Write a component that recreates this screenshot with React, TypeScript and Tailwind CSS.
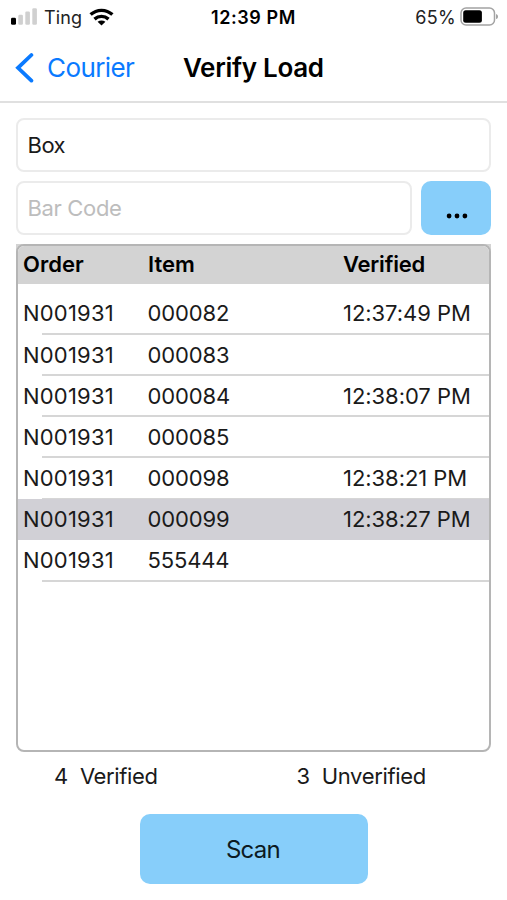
const rows = [
  { item: "000082", order: "N001931", verified: "12:37:49 PM" },
  { item: "000083", order: "N001931", verified: "" },
  { item: "000084", order: "N001931", verified: "12:38:07 PM" },
  { item: "000085", order: "N001931", verified: "" },
  { item: "000098", order: "N001931", verified: "12:38:21 PM" },
  { item: "000099", order: "N001931", verified: "12:38:27 PM", selected: true },
  { item: "555444", order: "N001931", verified: "" },
];

function StatusBar() {
  return (
    <div className="grid h-[34px] grid-cols-3 items-center text-[18px] leading-none text-[#222]">
      <div className="flex items-center pl-[10px]">
        <svg width="28" height="18" viewBox="0 0 28 18" aria-hidden="true">
          <rect x="1" y="9.8" width="5" height="7" rx="1.4" fill="#000" />
          <rect x="8.3" y="6.8" width="4.6" height="10" rx="1.2" fill="#d0d0d0" />
          <rect x="15.3" y="3.6" width="4.6" height="13.2" rx="1.2" fill="#d0d0d0" />
          <rect x="22.3" y="0.2" width="4.6" height="16.6" rx="1.2" fill="#d0d0d0" />
        </svg>
        <span className="ml-[6px] pt-px tracking-[0.1px]">Ting</span>
        <svg className="ml-[7px]" width="25" height="18" viewBox="0 0 25 18" aria-hidden="true">
          <g fill="none" stroke="#000" strokeWidth="3.4">
            <path d="M1.6 6.6C7.9 .9 17.1 .9 23.4 6.6" />
            <path d="M5.5 11.1C9.6 7.5 15.4 7.5 19.5 11.1" />
          </g>
          <path d="M8.6 13.8C10.9 12 14.1 12 16.4 13.8L12.5 17.6Z" fill="#000" />
        </svg>
      </div>
      <span className="pt-px text-center font-semibold tracking-[0.6px] text-black">12:39 PM</span>
      <div className="flex items-center justify-end pr-[8px]">
        <span className="pt-px tracking-[0.3px]">65%</span>
        <svg className="ml-[4px]" width="39" height="20" viewBox="0 0 39 20" aria-hidden="true">
          <rect x="1" y="1" width="33.5" height="17" rx="5" fill="none" stroke="#a3a3a3" strokeWidth="1.5" />
          <rect x="3.2" y="3.3" width="18.7" height="12.4" rx="2.5" fill="#000" />
          <path d="M36 6.9C38.7 7.8 38.7 11.2 36 12.1Z" fill="#a3a3a3" />
        </svg>
      </div>
    </div>
  );
}

function NavBar() {
  return (
    <header className="flex h-[69px] items-center border-b-2 border-[#e0e0e0] pl-[15px]">
      <button className="flex w-[168px] items-center text-[26px] text-[#0a7aff]">
        <svg width="19" height="32" viewBox="0 0 19 32" aria-hidden="true">
          <path
            d="M16.4 3L3 15.8L16.4 28.6"
            fill="none"
            stroke="currentColor"
            strokeWidth="3.8"
            strokeLinecap="round"
            strokeLinejoin="miter"
          />
        </svg>
        <span className="ml-[13px] tracking-[-0.6px]">Courier</span>
      </button>
      <h1 className="text-[26px] font-semibold tracking-[-0.3px]">Verify Load</h1>
    </header>
  );
}

export default function App() {
  return (
    <div className="flex h-[900px] w-[507px] flex-col overflow-hidden bg-white font-['Inter',sans-serif] text-[22px] text-black">
      <StatusBar />
      <NavBar />

      <main className="flex flex-1 flex-col px-4 pt-[15px] text-[#1a1a1a]">
        <div className="flex h-[54px] w-[475px] items-center rounded-[8px] border-2 border-[#ebebeb] pl-[9.5px] tracking-[-0.5px]">
          Box
        </div>
        <div className="mt-[9px] flex h-[54px] w-[475px] gap-[9px]">
          <div className="flex w-[396px] items-center rounded-[8px] border-2 border-[#ebebeb] pl-[9.5px] tracking-[-0.35px] text-[#bdbdbd]">
            Bar Code
          </div>
          <button className="flex flex-1 items-center justify-center rounded-[10px] bg-[#87cefa]" aria-label="More">
            <svg className="mt-[15px] ml-[2px]" width="22" height="6" viewBox="0 0 22 6" aria-hidden="true">
              <circle cx="3.1" cy="3" r="2.4" />
              <circle cx="11" cy="3" r="2.4" />
              <circle cx="18.9" cy="3" r="2.4" />
            </svg>
          </button>
        </div>

        <section className="mt-[9px] w-[475px] bg-[linear-gradient(#d3d3d3_20px,transparent_20px)]">
          <div className="h-[508px] overflow-hidden rounded-[8px] border-2 border-[#b5b5b5] bg-white">
            <div className="grid h-[38px] grid-cols-[124px_196px_1fr] items-center bg-[#d3d3d3] pb-px pl-[5px] font-semibold text-black">
              <span>Order</span>
              <span className="pl-px">Item</span>
              <span className="tracking-[-0.2px]">Verified</span>
            </div>
            <ul className="pt-[9.4px]">
              {rows.map((row) => (
                <li
                  key={row.item}
                  className={`h-[41.15px] ${row.selected ? "bg-[#d1d0d6]" : ""}`}
                >
                  <div className="grid h-[39.6px] grid-cols-[124px_196px_1fr] items-center whitespace-nowrap pt-[1.6px] pl-[5px]">
                    <span className="tracking-[0.2px]">{row.order}</span>
                    <span className="pl-[0.5px] tracking-[-0.15px]">{row.item}</span>
                    <span className="tracking-[-0.05px]">{row.verified}</span>
                  </div>
                  {!row.selected && <div className="ml-[24px] h-[2px] bg-[#d6d6d6]" />}
                </li>
              ))}
            </ul>
          </div>
        </section>

        <div className="flex h-[48px] items-center tracking-[-0.35px]">
          <div className="flex w-[242px] gap-[12px] pl-[38px]">
            <span>4</span>
            <span>Verified</span>
          </div>
          <div className="flex gap-[12px] pl-[38.5px]">
            <span>3</span>
            <span>Unverified</span>
          </div>
        </div>

        <button className="mt-[14px] ml-[124px] h-[70px] w-[228px] rounded-[10px] bg-[#87cefa] pt-[2px] pr-[2px] text-[24px] tracking-[-0.7px] text-[#0c1a22]">
          Scan
        </button>
      </main>
    </div>
  );
}
